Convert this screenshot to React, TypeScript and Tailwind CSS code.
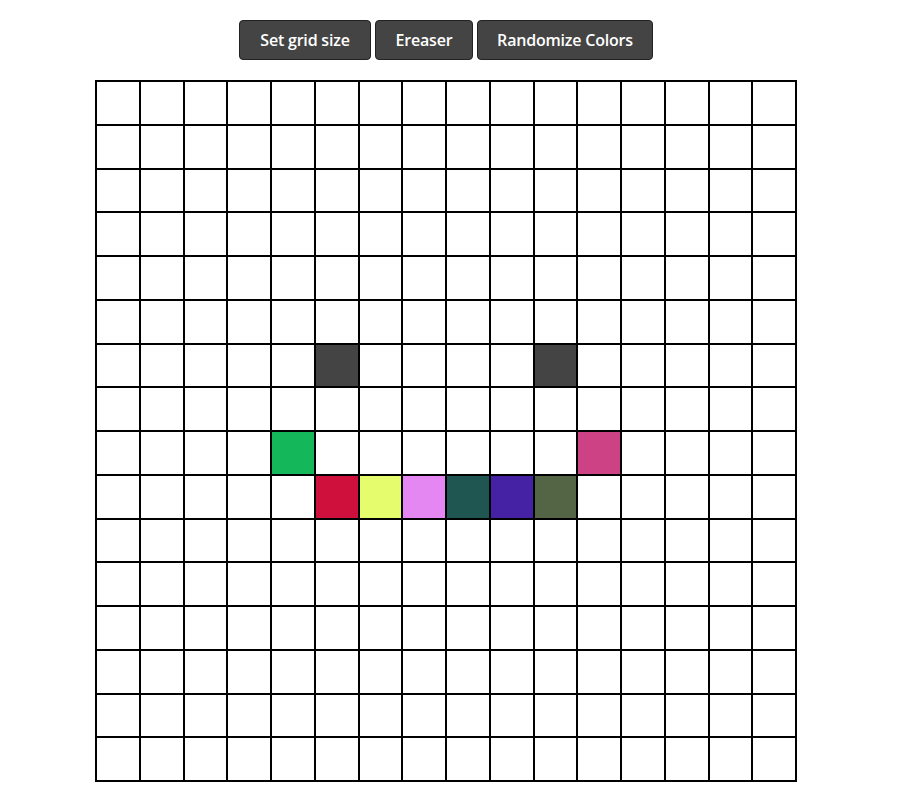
import React from "react"

const painted: Record<string, string> = {
  "6-5": "bg-[#444444]",
  "6-10": "bg-[#444444]",
  "8-4": "bg-[#14b85a]",
  "8-11": "bg-[#cc4285]",
  "9-5": "bg-[#cf103d]",
  "9-6": "bg-[#e5fd6c]",
  "9-7": "bg-[#e487f2]",
  "9-8": "bg-[#1f5652]",
  "9-9": "bg-[#4521a3]",
  "9-10": "bg-[#536545]",
}

const SIZE = 16

export default function App() {
  const cells = []
  for (let r = 0; r < SIZE; r++) {
    for (let c = 0; c < SIZE; c++) {
      const color = painted[`${r}-${c}`] || "bg-white"
      cells.push(<div key={`${r}-${c}`} className={`border border-black ${color}`} />)
    }
  }

  return (
    <div className="w-[892px] bg-white pt-5 pb-2 flex flex-col items-center" style={{ fontFamily: '"Open Sans", "Noto Sans", sans-serif' }}>
      {/* Controls */}
      <div className="flex gap-1">
        <button className="h-10 w-[132px] rounded-[4px] border border-[#222222] bg-[#444444] text-white text-[16px] font-semibold tracking-[-0.2px]">
          Set grid size
        </button>
        <button className="h-10 w-[98px] rounded-[4px] border border-[#222222] bg-[#444444] text-white text-[16px] font-semibold tracking-[-0.2px]">
          Ereaser
        </button>
        <button className="h-10 w-[176px] rounded-[4px] border border-[#222222] bg-[#444444] text-white text-[16px] font-semibold tracking-[-0.2px]">
          Randomize Colors
        </button>
      </div>

      {/* Grid */}
      <div className="mt-5 border border-black">
        <div className="grid grid-cols-[repeat(16,43.75px)] grid-rows-[repeat(16,43.75px)] w-[700px] h-[700px]">
          {cells}
        </div>
      </div>
    </div>
  )
}
